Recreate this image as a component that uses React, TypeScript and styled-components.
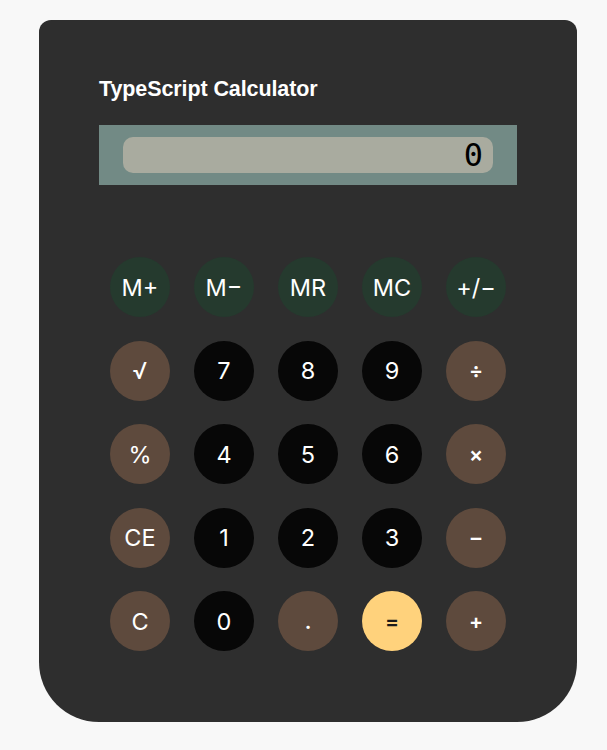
import React, { useState } from "react";
import styled, { createGlobalStyle } from "styled-components";

const GlobalStyle = createGlobalStyle`
  html, body {
    margin: 0;
    padding: 0;
    background: #f8f8f8;
  }
  body {
    font-family: Inter, "Liberation Sans", Arial, sans-serif;
  }
`;

const Page = styled.div`
  padding: 20px 30px 28px 39px;
`;

const Card = styled.div`
  width: 538px;
  box-sizing: border-box;
  background: #2e2e2e;
  border-radius: 12px 12px 60px 60px;
  padding: 57px 60px 71px;
  display: flex;
  flex-direction: column;
`;

const Title = styled.h1`
  margin: 0;
  font-family: "Liberation Sans", Arial, Helvetica, sans-serif;
  font-weight: 700;
  font-size: 21.5px;
  line-height: 25px;
  letter-spacing: -0.1px;
  color: #ffffff;
`;

const Display = styled.div`
  margin-top: 23px;
  height: 60px;
  box-sizing: border-box;
  background: #728a85;
  padding: 12px 24px;
`;

const Screen = styled.div`
  height: 36px;
  border-radius: 10px;
  background: #a9ab9f;
  padding-right: 10px;
  text-align: right;
  font-family: "DejaVu Sans Mono", "Liberation Mono", monospace;
  font-size: 32px;
  line-height: 37px;
  color: #000000;
  overflow: hidden;
`;

const Keypad = styled.div`
  margin-top: 72px;
  display: grid;
  grid-template-columns: repeat(5, 60px);
  column-gap: 24px;
  row-gap: 23.5px;
  justify-content: center;
`;

type Kind = "mem" | "func" | "num" | "eq";

const bg: Record<Kind, string> = {
  mem: "#253a2e",
  func: "#5e4a3d",
  num: "#070707",
  eq: "#ffd27c",
};

const Key = styled.button<{ $kind: Kind; $small?: boolean }>`
  width: 60px;
  height: 60px;
  border: none;
  border-radius: 50%;
  padding: 0;
  background: ${(p) => bg[p.$kind]};
  color: ${(p) => (p.$kind === "eq" ? "#1a1a1a" : "#ffffff")};
  font-family: Inter, "Liberation Sans", Arial, sans-serif;
  font-size: ${(p) => (p.$small ? "21px" : "23.5px")};
  font-weight: ${(p) => (p.$small || p.$kind === "eq" ? 600 : 400)};
  display: flex;
  align-items: center;
  justify-content: center;
  cursor: pointer;
`;

const keys: { label: string; kind: Kind; small?: boolean }[] = [
  { label: "M+", kind: "mem" },
  { label: "M−", kind: "mem" },
  { label: "MR", kind: "mem" },
  { label: "MC", kind: "mem" },
  { label: "+/−", kind: "mem" },
  { label: "√", kind: "func" },
  { label: "7", kind: "num" },
  { label: "8", kind: "num" },
  { label: "9", kind: "num" },
  { label: "÷", kind: "func", small: true },
  { label: "%", kind: "func" },
  { label: "4", kind: "num" },
  { label: "5", kind: "num" },
  { label: "6", kind: "num" },
  { label: "×", kind: "func", small: true },
  { label: "CE", kind: "func" },
  { label: "1", kind: "num" },
  { label: "2", kind: "num" },
  { label: "3", kind: "num" },
  { label: "–", kind: "func", small: true },
  { label: "C", kind: "func" },
  { label: "0", kind: "num" },
  { label: ".", kind: "func", small: true },
  { label: "=", kind: "eq", small: true },
  { label: "+", kind: "func", small: true },
];

export default function App() {
  const [value] = useState("0");
  return (
    <>
      <GlobalStyle />
      <Page>
        <Card>
          <Title>TypeScript Calculator</Title>
          <Display>
            <Screen>{value}</Screen>
          </Display>
          <Keypad>
            {keys.map((k) => (
              <Key key={k.label} $kind={k.kind} $small={k.small}>
                {k.label}
              </Key>
            ))}
          </Keypad>
        </Card>
      </Page>
    </>
  );
}
